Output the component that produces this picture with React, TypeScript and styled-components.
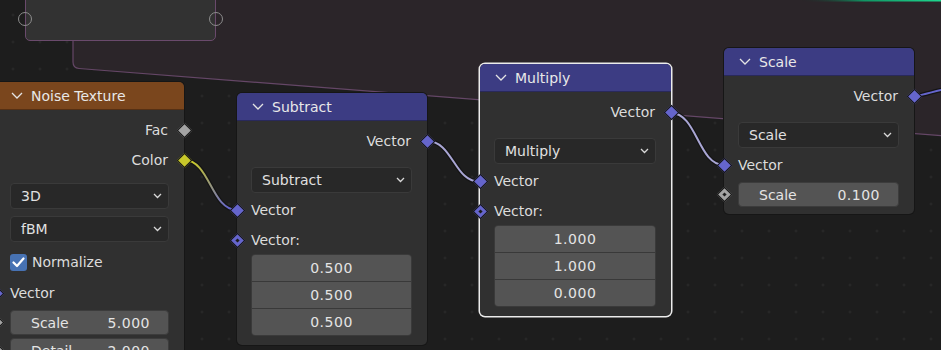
import React from 'react';
import styled, { createGlobalStyle } from 'styled-components';

const GlobalStyle = createGlobalStyle`
  html, body { margin: 0; padding: 0; background: #1d1d1d; overflow: hidden; }
  body { font-family: "DejaVu Sans", "Noto Sans", sans-serif; }
`;

const Canvas = styled.div`
  position: relative;
  width: 941px;
  height: 350px;
  overflow: hidden;
  background-color: #1d1d1d;
  background-image: radial-gradient(circle, #2d2d2d 0.9px, transparent 1.4px);
  background-size: 27px 27px;
  background-position: -0.5px 1.5px;
  font-family: "DejaVu Sans", "Noto Sans", sans-serif;
  font-size: 14px;
  color: #dedede;
`;

const Backdrop = styled.svg`
  position: absolute;
  left: 0;
  top: 0;
  width: 941px;
  height: 350px;
`;

const GroupNode = styled.div`
  position: absolute;
  left: 25px;
  top: -30px;
  width: 191px;
  height: 71px;
  box-sizing: border-box;
  background: #323232;
  border: 1px solid #6a4a6c;
  border-radius: 5px;
`;

const RingSocket = styled.span<{ $side: 'left' | 'right' }>`
  position: absolute;
  top: 41px;
  ${(p) => (p.$side === 'left' ? 'left: -8px;' : 'right: -8px;')}
  width: 14px;
  height: 14px;
  box-sizing: border-box;
  border: 1.5px solid #8c8c8c;
  border-radius: 50%;
`;

const NodeBox = styled.div<{ $x: number; $y: number; $w: number; $selected?: boolean; $pb: number }>`
  position: absolute;
  left: ${(p) => p.$x}px;
  top: ${(p) => p.$y}px;
  width: ${(p) => p.$w}px;
  box-sizing: border-box;
  background: #303030;
  border-radius: 5px;
  box-shadow: ${(p) => (p.$selected ? '0 0 0 1.5px #ececec' : '0 0 0 1px #161616')};
  display: flex;
  flex-direction: column;
  padding-bottom: ${(p) => p.$pb}px;
`;

const Header = styled.div<{ $color: string }>`
  height: 28px;
  box-sizing: border-box;
  background: ${(p) => p.$color};
  border-radius: 5px 5px 0 0;
  border-bottom: 1px solid rgba(0, 0, 0, 0.3);
  display: flex;
  align-items: center;
  gap: 8px;
  padding-left: 15px;
  color: #e8e8e8;
  font-size: 14px;
`;

const Body = styled.div`
  display: flex;
  flex-direction: column;
  padding-top: 7px;
`;

const Row = styled.div<{ $out?: boolean; $mt?: number; $h?: number }>`
  position: relative;
  height: ${(p) => p.$h ?? 26}px;
  margin-top: ${(p) => p.$mt ?? 0}px;
  display: flex;
  align-items: center;
  justify-content: ${(p) => (p.$out ? 'flex-end' : 'flex-start')};
  padding: 0 16px 0 14px;
  color: #dcdcdc;
`;

const Socket = styled.span<{ $side: 'left' | 'right'; $color: string; $dot?: boolean }>`
  position: absolute;
  top: 50%;
  ${(p) => (p.$side === 'left' ? 'left: -5.5px;' : 'right: -5.5px;')}
  width: 11px;
  height: 11px;
  margin-top: -5.5px;
  box-sizing: border-box;
  background: ${(p) => p.$color};
  border: 1px solid #161616;
  transform: rotate(45deg);
  z-index: 2;
  &::after {
    content: '';
    display: ${(p) => (p.$dot ? 'block' : 'none')};
    position: absolute;
    left: 50%;
    top: 50%;
    width: 3px;
    height: 3px;
    margin: -1.5px 0 0 -1.5px;
    background: #1c1c1c;
  }
`;

const Dropdown = styled.div<{ $mt: number }>`
  height: 26px;
  margin: ${(p) => p.$mt}px 15px 0 14px;
  box-sizing: border-box;
  background: #282828;
  border: 1px solid #3a3a3a;
  border-radius: 4px;
  display: flex;
  align-items: center;
  justify-content: space-between;
  padding: 0 6px 0 10px;
  color: #e0e0e0;
`;

const FieldStack = styled.div<{ $mt: number }>`
  margin: ${(p) => p.$mt}px 15px 0 14px;
  display: flex;
  flex-direction: column;
  gap: 1px;
  background: #393939;
  border: 1px solid #3a3a3a;
  border-radius: 4px;
  overflow: hidden;
`;

const StackField = styled.div`
  height: 26px;
  background: #545454;
  display: flex;
  align-items: center;
  justify-content: center;
  color: #e4e4e4;
  letter-spacing: 0.5px;
`;

const ValueField = styled.div`
  flex: 1;
  height: 25px;
  box-sizing: border-box;
  background: #545454;
  border: 1px solid #3c3c3c;
  border-radius: 4px;
  display: flex;
  align-items: center;
  justify-content: space-between;
  padding: 0 18px 0 20px;
  color: #e4e4e4;
`;

const Num = styled.span`
  letter-spacing: 0.5px;
`;

const FieldRow = styled.div<{ $mt: number }>`
  position: relative;
  display: flex;
  margin-top: ${(p) => p.$mt}px;
  padding: 0 15px 0 14px;
`;

const CheckBox = styled.span`
  width: 17px;
  height: 17px;
  box-sizing: border-box;
  background: #4772b3;
  border-radius: 3px;
  display: flex;
  align-items: center;
  justify-content: center;
  margin-right: 5px;
  margin-left: 0;
`;

const VEC = '#6565cc';
const VEC_HL = '#a9a6d4';
const YEL = '#c8c82a';
const GREY = '#a3a3a3';

const Chevron: React.FC<{ small?: boolean }> = ({ small }) =>
  small ? (
    <svg width="9" height="6" viewBox="0 0 9 6">
      <path d="M1 1 L4.5 4.5 L8 1" fill="none" stroke="#d8d8d8" strokeWidth="1.3" />
    </svg>
  ) : (
    <svg width="12" height="7" viewBox="0 0 12 7">
      <path d="M1 1 L6 6 L11 1" fill="none" stroke="#e4e4e4" strokeWidth="1.3" />
    </svg>
  );

const Check = () => (
  <svg width="13" height="11" viewBox="0 0 13 11">
    <path d="M1.5 5.5 L5 9 L11.5 1.5" fill="none" stroke="#ffffff" strokeWidth="2.2" strokeLinecap="round" strokeLinejoin="round" />
  </svg>
);

const Link: React.FC<{ d: string; color: string }> = ({ d, color }) => (
  <g fill="none">
    <path d={d} stroke="#141414" strokeWidth="4.5" />
    <path d={d} stroke={color} strokeWidth="2" />
  </g>
);

export default function App() {
  return (
    <>
      <GlobalStyle />
      <Canvas>
        <Backdrop viewBox="0 0 941 350">
          <defs>
            <linearGradient id="g1" gradientUnits="userSpaceOnUse" x1="184" y1="160" x2="237" y2="210">
              <stop offset="0.1" stopColor={YEL} />
              <stop offset="0.9" stopColor={VEC} />
            </linearGradient>
            <linearGradient id="green" x1="0" x2="1" y1="0" y2="0">
              <stop offset="0" stopColor="#1d2624" stopOpacity="0" />
              <stop offset="0.45" stopColor="#119463" />
              <stop offset="1" stopColor="#1ed88f" />
            </linearGradient>
          </defs>
          <path
            d="M73 -5 L73 62 Q73 68 79 68.5 L945 136 L945 -5 Z"
            fill="#2b2529"
            stroke="#654767"
            strokeWidth="1.2"
          />
          <rect x="800" y="-1" width="141" height="2.5" fill="url(#green)" />
          <Link d="M184 160 C 210 160, 211 210, 237 210" color="url(#g1)" />
          <Link d="M427 141 C 453 141, 454 182, 480 182" color={VEC_HL} />
          <Link d="M671 113 C 697 113, 698 165, 724 165" color={VEC_HL} />
          <Link d="M914 96 C 925 95, 934 91, 946 89" color={VEC} />
        </Backdrop>

        <GroupNode>
          <RingSocket $side="left" />
          <RingSocket $side="right" />
        </GroupNode>

        {/* Noise Texture */}
        <NodeBox $x={-4} $y={82} $w={188} $pb={10}>
          <Header $color="#7a461d">
            <Chevron />
            <span>Noise Texture</span>
          </Header>
          <Body>
            <Row $out>
              Fac
              <Socket $side="right" $color={GREY} />
            </Row>
            <Row $out $mt={4}>
              Color
              <Socket $side="right" $color={YEL} />
            </Row>
            <Dropdown $mt={10}>
              <span>3D</span>
              <Chevron small />
            </Dropdown>
            <Dropdown $mt={7}>
              <span>fBM</span>
              <Chevron small />
            </Dropdown>
            <Row $mt={7}>
              <CheckBox>
                <Check />
              </CheckBox>
              Normalize
            </Row>
            <Row $mt={5}>
              Vector
              <Socket $side="left" $color={VEC} />
            </Row>
            <FieldRow $mt={4}>
              <Socket $side="left" $color={GREY} $dot />
              <ValueField>
                <span>Scale</span>
                <Num>5.000</Num>
              </ValueField>
            </FieldRow>
            <FieldRow $mt={3}>
              <Socket $side="left" $color={GREY} $dot />
              <ValueField>
                <span>Detail</span>
                <Num>2.000</Num>
              </ValueField>
            </FieldRow>
          </Body>
        </NodeBox>

        {/* Subtract */}
        <NodeBox $x={237} $y={93} $w={190} $pb={9}>
          <Header $color="#3c3c83">
            <Chevron />
            <span>Subtract</span>
          </Header>
          <Body>
            <Row $out>
              Vector
              <Socket $side="right" $color={VEC} />
            </Row>
            <Dropdown $mt={13}>
              <span>Subtract</span>
              <Chevron small />
            </Dropdown>
            <Row $mt={4}>
              Vector
              <Socket $side="left" $color={VEC} />
            </Row>
            <Row $mt={4}>
              Vector:
              <Socket $side="left" $color={VEC} $dot />
            </Row>
            <FieldStack $mt={1}>
              <StackField>0.500</StackField>
              <StackField>0.500</StackField>
              <StackField>0.500</StackField>
            </FieldStack>
          </Body>
        </NodeBox>

        {/* Multiply */}
        <NodeBox $x={480} $y={64} $w={191} $pb={9} $selected>
          <Header $color="#3c3c83">
            <Chevron />
            <span>Multiply</span>
          </Header>
          <Body>
            <Row $out>
              Vector
              <Socket $side="right" $color={VEC} />
            </Row>
            <Dropdown $mt={13}>
              <span>Multiply</span>
              <Chevron small />
            </Dropdown>
            <Row $mt={4}>
              Vector
              <Socket $side="left" $color={VEC} />
            </Row>
            <Row $mt={4}>
              Vector:
              <Socket $side="left" $color={VEC} $dot />
            </Row>
            <FieldStack $mt={1}>
              <StackField>1.000</StackField>
              <StackField>1.000</StackField>
              <StackField>0.000</StackField>
            </FieldStack>
          </Body>
        </NodeBox>

        {/* Scale */}
        <NodeBox $x={724} $y={48} $w={190} $pb={7}>
          <Header $color="#3c3c83">
            <Chevron />
            <span>Scale</span>
          </Header>
          <Body>
            <Row $out>
              Vector
              <Socket $side="right" $color={VEC} />
            </Row>
            <Dropdown $mt={13}>
              <span>Scale</span>
              <Chevron small />
            </Dropdown>
            <Row $mt={4}>
              Vector
              <Socket $side="left" $color={VEC} />
            </Row>
            <FieldRow $mt={4}>
              <Socket $side="left" $color={GREY} $dot />
              <ValueField>
                <span>Scale</span>
                <Num>0.100</Num>
              </ValueField>
            </FieldRow>
          </Body>
        </NodeBox>
      </Canvas>
    </>
  );
}
